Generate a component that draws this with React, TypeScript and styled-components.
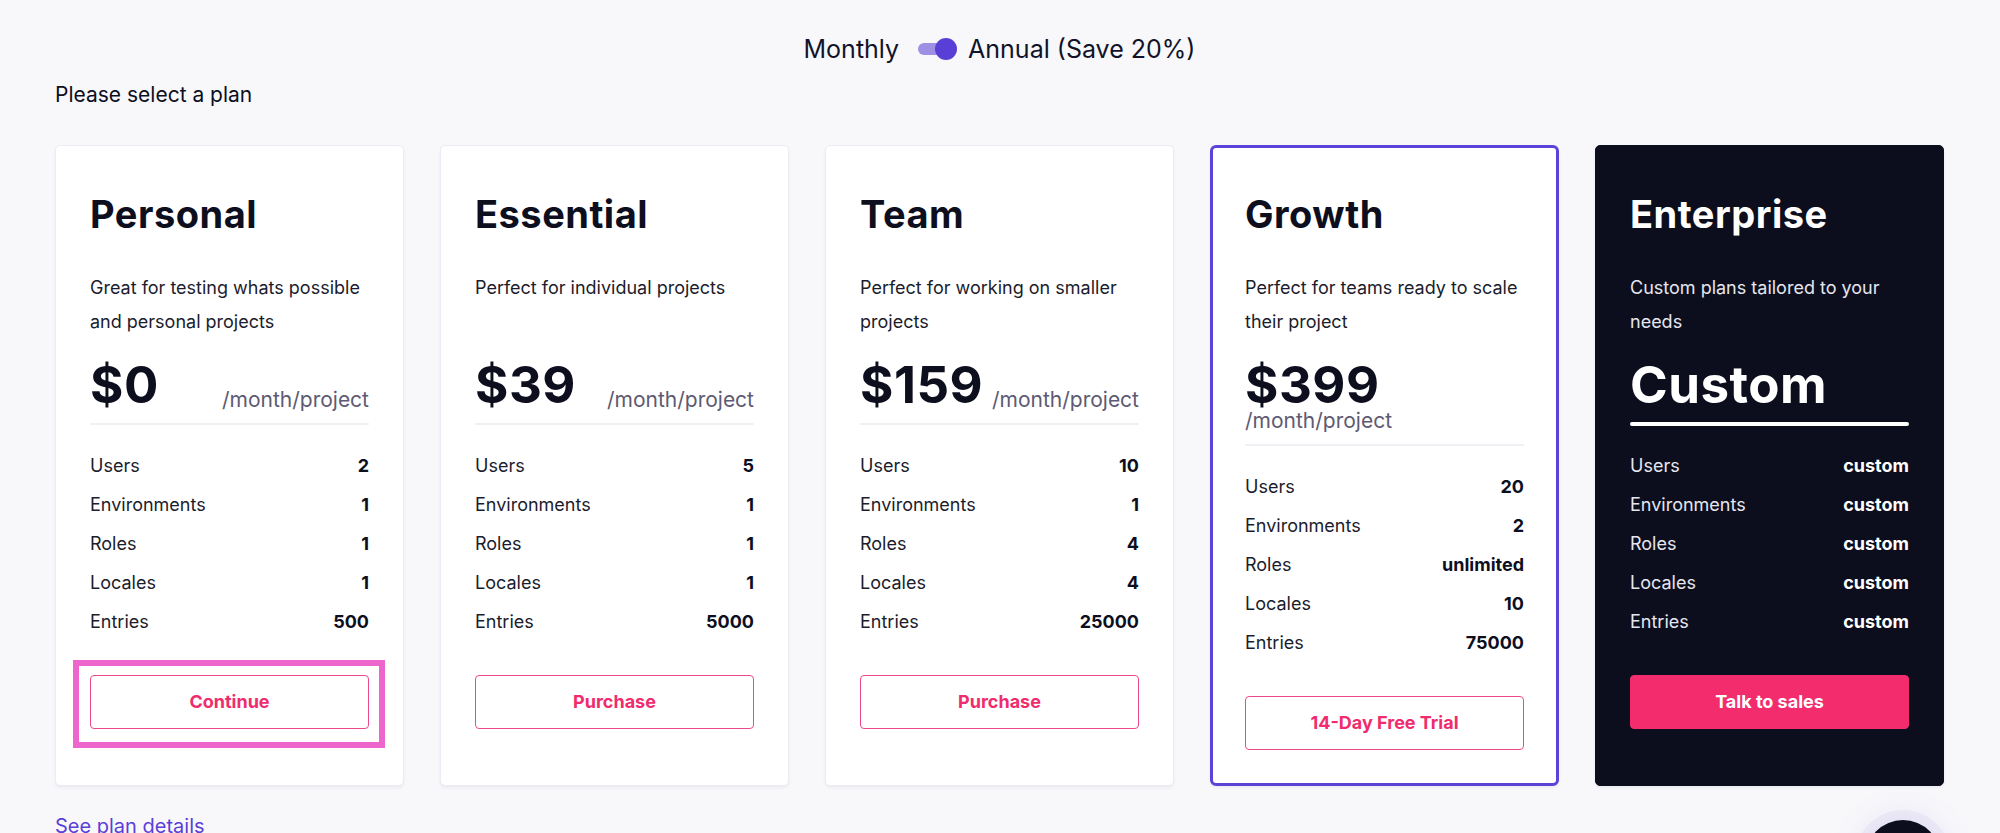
import React from "react";
import styled, { createGlobalStyle, css } from "styled-components";

const GlobalStyle = createGlobalStyle`
    html, body {
        margin: 0;
        padding: 0;
        background-color: #f8f8fb;
    }
    body {
        font-family: Inter, "Noto Sans", sans-serif;
        color: #0d0f1e;
    }
    * {
        box-sizing: border-box;
    }
`;

const StyledMain = styled.main`
    padding: 34px 56px 0 55px;
`;

const ToggleRow = styled.div`
    display: flex;
    justify-content: center;
    align-items: center;
    font-size: 25px;
    line-height: 30px;
    color: #11132a;
`;

const Switch = styled.div`
    position: relative;
    width: 39px;
    height: 22px;
    margin: 0 11px 0 19px;
`;

const SwitchTrack = styled.span`
    position: absolute;
    left: 0;
    top: 5px;
    width: 28px;
    height: 12px;
    border-radius: 6px;
    background-color: #9c8fe4;
`;

const SwitchThumb = styled.span`
    position: absolute;
    right: 0;
    top: 0;
    width: 22px;
    height: 22px;
    border-radius: 50%;
    background-color: #5a3fd6;
`;

const Prompt = styled.p`
    margin: 18px 0 0;
    font-size: 21px;
    line-height: 25px;
    color: #0d0f1e;
`;

const PlanGrid = styled.div`
    display: grid;
    grid-template-columns: repeat(5, 1fr);
    gap: 36px;
    margin-top: 38px;
`;

const Card = styled.section<{ $variant: "plain" | "featured" | "dark" }>`
    display: flex;
    flex-direction: column;
    background-color: #ffffff;
    border: 1px solid #ebebf3;
    border-radius: 5px;
    padding: 46px 34px 34px;
    box-shadow: 0 2px 3px rgba(40, 30, 110, 0.06);
    color: #1b1c2c;

    ${(p) =>
        p.$variant === "featured" &&
        css`
            border: 3px solid #5a44d8;
            border-radius: 6px;
            padding: 44px 32px 33px;
        `}

    ${(p) =>
        p.$variant === "dark" &&
        css`
            background-color: #0c0e1d;
            border-color: #0c0e1d;
            color: #e6e6ee;
        `}
`;

const PlanName = styled.h2<{ $dark?: boolean }>`
    margin: 0;
    font-size: 38px;
    line-height: 1.2;
    font-weight: 700;
    letter-spacing: 0.5px;
    color: ${(p) => (p.$dark ? "#ffffff" : "#0d0f1e")};
`;

const Blurb = styled.p`
    margin: 33px 0 0;
    min-height: 68px;
    font-size: 18px;
    line-height: 34px;
`;

const PriceRow = styled.div<{ $stacked?: boolean }>`
    display: flex;
    flex-direction: ${(p) => (p.$stacked ? "column" : "row")};
    justify-content: space-between;
    align-items: ${(p) => (p.$stacked ? "flex-start" : "flex-end")};
    margin-top: 20px;
    white-space: nowrap;
`;

const Amount = styled.span<{ $dark?: boolean }>`
    font-size: 51px;
    line-height: 1;
    font-weight: 700;
    letter-spacing: 0.5px;
    color: ${(p) => (p.$dark ? "#ffffff" : "#0d0f1e")};
`;

const Unit = styled.span`
    font-size: 21px;
    line-height: 1;
    color: #5e5a72;
`;

const Divider = styled.hr<{ $bold?: boolean }>`
    border: none;
    margin: ${(p) => (p.$bold ? "12px 0 20px" : "13px 0 21px")};
    height: ${(p) => (p.$bold ? "4px" : "2px")};
    border-radius: 2px;
    background-color: ${(p) => (p.$bold ? "#ffffff" : "#efeff4")};
`;

const FeatureList = styled.ul`
    list-style: none;
    margin: 0;
    padding: 0;
`;

const FeatureRow = styled.li`
    display: flex;
    justify-content: space-between;
    font-size: 18px;
    line-height: 39px;
`;

const FeatureValue = styled.span<{ $dark?: boolean }>`
    font-weight: 700;
    color: ${(p) => (p.$dark ? "#ffffff" : "#0d0f1e")};
`;

const PlanButton = styled.button<{ $solid?: boolean; $focused?: boolean }>`
    position: relative;
    margin-top: 34px;
    width: 100%;
    height: 54px;
    border-radius: 4px;
    font-family: inherit;
    font-size: 18px;
    font-weight: 650;
    cursor: pointer;
    background-color: ${(p) => (p.$solid ? "#f32c6d" : "#ffffff")};
    color: ${(p) => (p.$solid ? "#ffffff" : "#ef2c6e")};
    border: 1px solid ${(p) => (p.$solid ? "#f32c6d" : "#ee4a8a")};

    ${(p) =>
        p.$focused &&
        css`
            &::after {
                content: "";
                position: absolute;
                top: -16px;
                bottom: -20px;
                left: -18px;
                right: -17px;
                border: 6px solid #ee66cc;
                pointer-events: none;
            }
        `}
`;

const DetailsLink = styled.a`
    display: inline-block;
    margin-top: 28px;
    font-size: 20px;
    line-height: 24px;
    color: #5a3fd6;
    text-decoration: none;
`;

const ChatLauncher = styled.button`
    position: fixed;
    right: 59px;
    bottom: -63px;
    width: 76px;
    height: 76px;
    border: none;
    border-radius: 50%;
    background-color: #0c0e1d;
    box-shadow: 0 0 0 10px rgba(120, 100, 200, 0.06), 0 0 24px 14px rgba(120, 100, 200, 0.08);
`;

type Plan = {
    name: string;
    blurb: string;
    price: string;
    unit?: string;
    features: [string, string][];
    cta: string;
    variant: "plain" | "featured" | "dark";
    focused?: boolean;
};

const featureNames = ["Users", "Environments", "Roles", "Locales", "Entries"];

const plans: Plan[] = [
    {
        name: "Personal",
        blurb: "Great for testing whats possible and personal projects",
        price: "$0",
        unit: "/month/project",
        features: featureNames.map((f, i) => [f, ["2", "1", "1", "1", "500"][i]]),
        cta: "Continue",
        variant: "plain",
        focused: true,
    },
    {
        name: "Essential",
        blurb: "Perfect for individual projects",
        price: "$39",
        unit: "/month/project",
        features: featureNames.map((f, i) => [f, ["5", "1", "1", "1", "5000"][i]]),
        cta: "Purchase",
        variant: "plain",
    },
    {
        name: "Team",
        blurb: "Perfect for working on smaller projects",
        price: "$159",
        unit: "/month/project",
        features: featureNames.map((f, i) => [f, ["10", "1", "4", "4", "25000"][i]]),
        cta: "Purchase",
        variant: "plain",
    },
    {
        name: "Growth",
        blurb: "Perfect for teams ready to scale their project",
        price: "$399",
        unit: "/month/project",
        features: featureNames.map((f, i) => [f, ["20", "2", "unlimited", "10", "75000"][i]]),
        cta: "14-Day Free Trial",
        variant: "featured",
    },
    {
        name: "Enterprise",
        blurb: "Custom plans tailored to your needs",
        price: "Custom",
        features: featureNames.map((f) => [f, "custom"]),
        cta: "Talk to sales",
        variant: "dark",
    },
];

function PlanCard({ plan }: { plan: Plan }) {
    const dark = plan.variant === "dark";

    return (
        <Card $variant={plan.variant}>
            <PlanName $dark={dark}>{plan.name}</PlanName>
            <Blurb>{plan.blurb}</Blurb>

            <PriceRow $stacked={plan.variant === "featured"}>
                <Amount $dark={dark}>{plan.price}</Amount>
                {plan.unit && <Unit>{plan.unit}</Unit>}
            </PriceRow>
            <Divider $bold={dark} />

            <FeatureList>
                {plan.features.map(([label, value]) => (
                    <FeatureRow key={label}>
                        <span>{label}</span>
                        <FeatureValue $dark={dark}>{value}</FeatureValue>
                    </FeatureRow>
                ))}
            </FeatureList>

            <PlanButton $solid={dark} $focused={plan.focused}>
                {plan.cta}
            </PlanButton>
        </Card>
    );
}

export default function App() {
    return (
        <>
            <GlobalStyle />
            <StyledMain>
                <ToggleRow>
                    <span>Monthly</span>
                    <Switch>
                        <SwitchTrack />
                        <SwitchThumb />
                    </Switch>
                    <span>Annual (Save 20%)</span>
                </ToggleRow>

                <Prompt>Please select a plan</Prompt>

                <PlanGrid>
                    {plans.map((plan) => (
                        <PlanCard key={plan.name} plan={plan} />
                    ))}
                </PlanGrid>

                <DetailsLink href="#">See plan details</DetailsLink>
            </StyledMain>
            <ChatLauncher aria-label="Open chat" />
        </>
    );
}
